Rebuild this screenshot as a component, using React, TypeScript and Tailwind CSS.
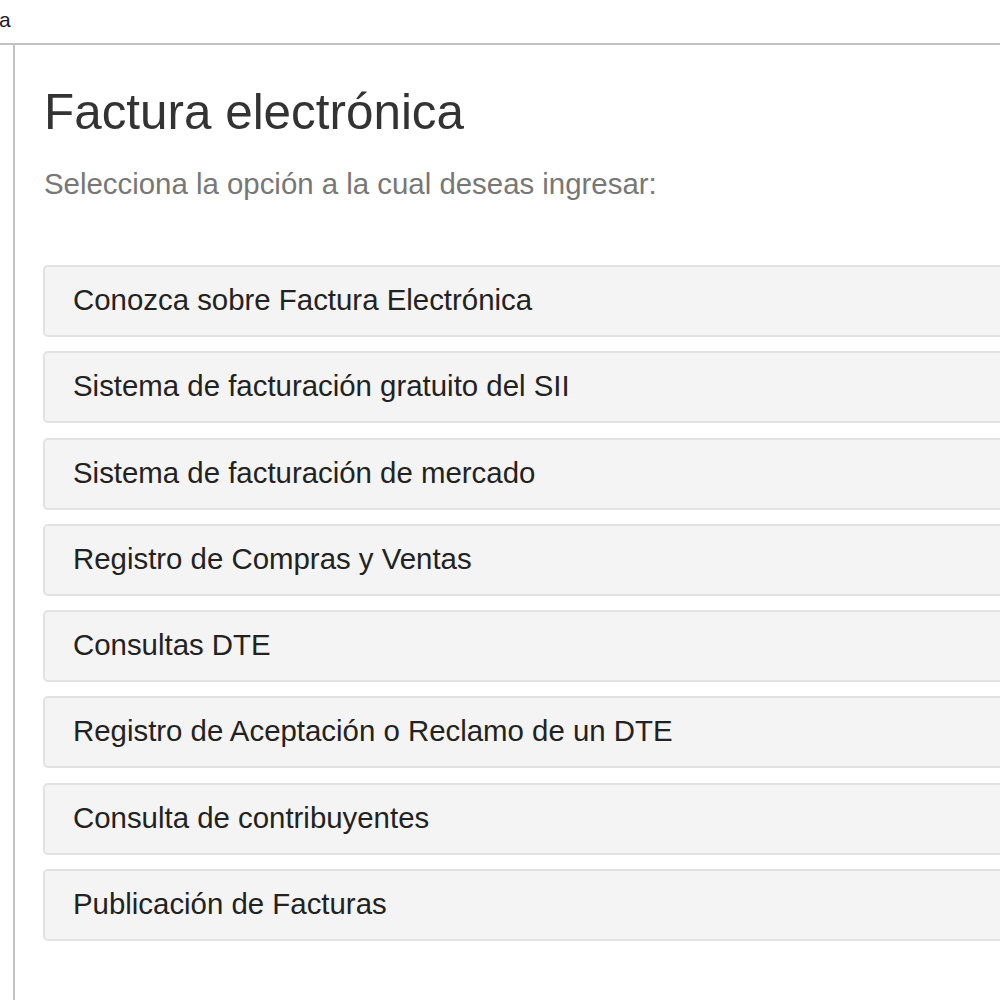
const options = [
  'Conozca sobre Factura Electrónica',
  'Sistema de facturación gratuito del SII',
  'Sistema de facturación de mercado',
  'Registro de Compras y Ventas',
  'Consultas DTE',
  'Registro de Aceptación o Reclamo de un DTE',
  'Consulta de contribuyentes',
  'Publicación de Facturas',
]

export default function App() {
  return (
    <div className="w-full h-[1000px] overflow-hidden bg-white font-['Liberation_Sans',Arial,sans-serif]">
      {/* Top strip, mostly scrolled out of view */}
      <div className="h-[45px] border-b-2 border-[#c2c2c2] flex items-start">
        <span className="text-[21px] leading-none text-[#1a1a2e] pt-[9px] -ml-[1px]">a</span>
      </div>

      <div className="flex h-full">
        <div className="w-[13px] shrink-0" />
        <div className="w-[2px] shrink-0 bg-[#c2c2c2]" />

        <main className="w-[1100px] shrink-0 pl-[28px] pt-[40px]">
          <h1 className="text-[49.4px] leading-[54px] text-[#333] pl-px">Factura electrónica</h1>
          <p className="mt-[27px] text-[29.4px] leading-[35px] text-[#777] pl-px">
            Selecciona la opción a la cual deseas ingresar:
          </p>

          <div className="mt-[64px] flex flex-col gap-[14.3px]">
            {options.map((label) => (
              <a
                key={label}
                href="#"
                className="h-[72px] flex items-center pl-[28px] pb-[3px] bg-[#f4f4f4] border-2 border-[#e2e2e2] rounded-[5px] text-[29.4px] leading-[35px] text-[#222]"
              >
                {label}
              </a>
            ))}
          </div>
        </main>
      </div>
    </div>
  )
}
